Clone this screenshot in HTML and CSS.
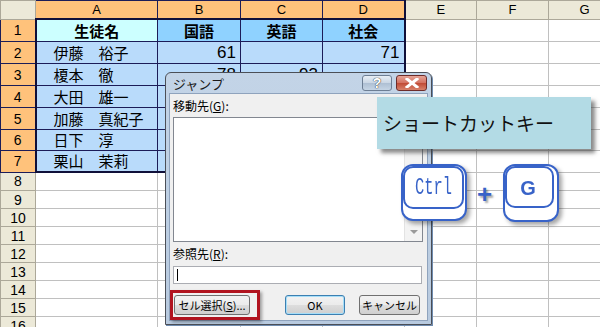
FILE: index.html
```html
<!DOCTYPE html>
<html lang="ja">
<head>
<meta charset="UTF-8">
<title>ジャンプ ショートカットキー</title>
<link rel="stylesheet" href="styles.css">
</head>
<body>

<table class="sheet">
    <colgroup>
        <col class="c-head"><col class="c-a"><col class="c-b"><col class="c-c"><col class="c-d"><col class="c-e"><col class="c-f"><col class="c-g">
    </colgroup>
    <tr class="hdr">
        <th class="corner"></th>
        <th class="sel">A</th><th class="sel">B</th><th class="sel">C</th><th class="sel sel-r">D</th>
        <th>E</th><th>F</th><th>G</th>
    </tr>
    <tr class="tall">
        <th class="sel">1</th>
        <td class="title name top left">生徒名</td>
        <td class="head top">国語</td><td class="head top">英語</td><td class="head top right">社会</td>
        <td></td><td></td><td></td>
    </tr>
    <tr class="tall">
        <th class="sel">2</th>
        <td class="name left">伊藤　裕子</td>
        <td class="num">61</td><td class="num"></td><td class="num right">71</td>
        <td></td><td></td><td></td>
    </tr>
    <tr class="tall">
        <th class="sel">3</th>
        <td class="name left">榎本　徹</td>
        <td class="num">78</td><td class="num">93</td><td class="num right"></td>
        <td></td><td></td><td></td>
    </tr>
    <tr class="tall">
        <th class="sel">4</th>
        <td class="name left">大田　雄一</td>
        <td class="num">84</td><td class="num">66</td><td class="num right">58</td>
        <td></td><td></td><td></td>
    </tr>
    <tr class="tall">
        <th class="sel">5</th>
        <td class="name left">加藤　真紀子</td>
        <td class="num">90</td><td class="num">72</td><td class="num right">80</td>
        <td></td><td></td><td></td>
    </tr>
    <tr class="tall short7">
        <th class="sel">6</th>
        <td class="name left">日下　淳</td>
        <td class="num">55</td><td class="num">81</td><td class="num right">64</td>
        <td></td><td></td><td></td>
    </tr>
    <tr class="tall short7">
        <th class="sel">7</th>
        <td class="name left bottom">栗山　茉莉</td>
        <td class="num bottom">73</td><td class="num bottom">88</td><td class="num right bottom">69</td>
        <td></td><td></td><td></td>
    </tr>
    <tr><th>8</th><td></td><td></td><td></td><td></td><td></td><td></td><td></td></tr>
    <tr><th>9</th><td></td><td></td><td></td><td></td><td></td><td></td><td></td></tr>
    <tr><th>10</th><td></td><td></td><td></td><td></td><td></td><td></td><td></td></tr>
    <tr><th>11</th><td></td><td></td><td></td><td></td><td></td><td></td><td></td></tr>
    <tr><th>12</th><td></td><td></td><td></td><td></td><td></td><td></td><td></td></tr>
    <tr><th>13</th><td></td><td></td><td></td><td></td><td></td><td></td><td></td></tr>
    <tr><th>14</th><td></td><td></td><td></td><td></td><td></td><td></td><td></td></tr>
    <tr><th>15</th><td></td><td></td><td></td><td></td><td></td><td></td><td></td></tr>
    <tr><th>16</th><td></td><td></td><td></td><td></td><td></td><td></td><td></td></tr>
</table>

<!-- Goto dialog -->
<div class="dialog">
    <div class="titlebar">
        <span class="title-text">ジャンプ</span>
        <span class="tb-btn help">?</span>
        <span class="tb-btn close">
            <svg width="14" height="10" viewBox="0 0 14 10"><path d="M2 1 L12 9 M12 1 L2 9" stroke="#fff" stroke-width="3" stroke-linecap="square"/></svg>
        </span>
    </div>
    <div class="dialog-body">
        <div class="label">移動先(<u>G</u>):</div>
        <div class="listbox">
            <div class="scroll"><span class="arrow"></span></div>
        </div>
        <div class="label">参照先(<u>R</u>):</div>
        <div class="input"><span class="caret"></span></div>
        <div class="buttons">
            <span class="mark"><span class="btn sel-btn">セル選択(<u>S</u>)...</span></span>
            <span class="btn ok">OK</span>
            <span class="btn cancel">キャンセル</span>
        </div>
    </div>
</div>

<div class="callout">ショートカットキー</div>

<div class="keys">
    <svg class="key ctrl" width="68" height="60" viewBox="0 0 68 60">
        <rect x="1" y="1" width="64" height="55" rx="11" fill="#fff" stroke="#3863c8" stroke-width="2"/>
        <rect x="3" y="3" width="59" height="41" rx="9" fill="#fff" stroke="#3863c8" stroke-width="2"/>
        <text x="14" y="30" textLength="37" lengthAdjust="spacingAndGlyphs" class="key-ctrl">Ctrl</text>
    </svg>
    <span class="plus">+</span>
    <svg class="key g" width="59" height="61" viewBox="0 0 59 61">
        <rect x="1" y="1" width="54" height="56" rx="11" fill="#fff" stroke="#3863c8" stroke-width="2"/>
        <rect x="3" y="3" width="47" height="40" rx="9" fill="#fff" stroke="#3863c8" stroke-width="2"/>
        <text x="25" y="31" text-anchor="middle" class="key-g">G</text>
    </svg>
</div>

</body>
</html>
```

FILE: styles.css
```css
body {
    margin: 0;
    width: 600px;
    height: 327px;
    overflow: hidden;
    position: relative;
    background: #fff;
    font-family: "Liberation Sans", "Noto Sans CJK JP", sans-serif;
}

/* spreadsheet */
.sheet {
    border-collapse: collapse;
    table-layout: fixed;
    width: 620px;
}
.c-head { width: 35px; }
.c-a { width: 122px; }
.c-b { width: 83px; }
.c-c { width: 82px; }
.c-d { width: 82px; }
.c-e, .c-f, .c-g { width: 72px; }

.sheet th, .sheet td {
    padding: 0;
    height: 17px;
    border: 1px solid #c0c0c0;
    overflow: hidden;
    white-space: nowrap;
}
.sheet th {
    background: #ece9d8;
    border-color: #aca899;
    font-weight: normal;
    font-size: 14px;
    color: #000;
    text-align: center;
}
.sheet .hdr th {
    font-size: 13px;
    height: 17px;
}
.sheet th.sel {
    background: #ffc27b;
    border-color: #1c1c58;
}
.sheet .hdr th.corner {
    background: #ece9d8;
}
.sheet tr.tall th, .sheet tr.tall td {
    height: 21px;
}
.sheet tr.short7 th, .sheet tr.short7 td {
    height: 20px;
}

.sheet td.name, .sheet td.num, .sheet td.head {
    background: #b9dbfb;
    border-color: #1c1c58;
}
.sheet td.name {
    font-family: "Noto Sans CJK JP", sans-serif;
    font-size: 15px;
    padding-left: 17px;
    line-height: 18px;
}
.sheet td.title {
    background: #ccffff;
    font-weight: bold;
    text-align: center;
    padding-left: 0;
}
.sheet td.head {
    background: #8fd2ff;
    font-family: "Noto Sans CJK JP", sans-serif;
    font-weight: bold;
    font-size: 15px;
    text-align: center;
}
.sheet td.num {
    font-size: 17px;
    text-align: right;
    padding-right: 4px;
}
.sheet td.top { border-top: 2px solid #10103a; }
.sheet td.left { border-left: 2px solid #10103a; }
.sheet td.right { border-right: 2px solid #10103a; }
.sheet td.bottom { border-bottom: 2px solid #10103a; }
.sheet th.sel-r { border-right: 2px solid #10103a; }

/* dialog */
.dialog {
    position: absolute;
    left: 165px;
    top: 72px;
    width: 267px;
    height: 253px;
    border: 1px solid #4b4f57;
    border-radius: 6px 6px 0 0;
    background: linear-gradient(#c3d4e7, #b8cadf);
    padding: 0 3px 3px 3px;
    box-sizing: border-box;
    display: flex;
    flex-direction: column;
    box-shadow: 1px 1px 0 #6f8cb0;
}
.titlebar {
    height: 23px;
    display: flex;
    align-items: center;
    gap: 4px;
    padding-left: 4px;
}
.title-text {
    flex: 1;
    font-family: "Noto Sans CJK JP", sans-serif;
    font-size: 13px;
    color: #1a1a1a;
}
.tb-btn {
    height: 14px;
    border-radius: 3px;
    display: flex;
    align-items: center;
    justify-content: center;
}
.help {
    width: 28px;
    border: 1px solid #6d7e94;
    background: linear-gradient(#e8eef5 0%, #c9d6e4 50%, #aebfd3 51%, #c6d5e5 100%);
    color: #fff;
    font-size: 14px;
    font-weight: bold;
    text-shadow: 0 0 1px #333, 0 0 1px #333;
}
.close {
    width: 29px;
    border: 1px solid #6e2d2a;
    background: linear-gradient(#e6a497 0%, #d3705f 50%, #c04a35 51%, #d7826b 100%);
    margin-right: 1px;
}
.dialog-body {
    flex: 1;
    background: #f0f0f0;
    border: 1px solid #8fa3bd;
    padding: 0 3px;
    display: flex;
    flex-direction: column;
    font-family: "Noto Sans CJK JP", sans-serif;
    font-size: 12px;
    color: #000;
}
.label {
    height: 14px;
    line-height: 14px;
    margin-top: 5px;
}
.listbox {
    margin-top: 4px;
    height: 123px;
    background: #fff;
    border: 1px solid #828790;
    margin-right: 1px;
    display: flex;
    justify-content: flex-end;
}
.scroll {
    width: 17px;
    background: #f3f3f3;
    border-left: 1px solid #e3e3e3;
    display: flex;
    align-items: flex-end;
    justify-content: center;
}
.arrow {
    width: 0;
    height: 0;
    border-left: 4px solid transparent;
    border-right: 4px solid transparent;
    border-top: 4px solid #9a9a9a;
    margin-bottom: 7px;
}
.listbox + .label {
    margin-top: 5px;
}
.input {
    height: 16px;
    margin-top: 5px;
    margin-right: 2px;
    background: #fff;
    border: 1px solid #abadb3;
    display: flex;
    align-items: center;
    padding-left: 3px;
}
.caret {
    width: 1px;
    height: 12px;
    background: #000;
}
.buttons {
    margin-top: 6px;
    display: flex;
    align-items: center;
}
.mark {
    border: 3px solid #b1131f;
    padding: 2px 7px 2px 1px;
    margin-left: -3px;
    box-shadow: 2px 2px 3px rgba(0, 0, 0, 0.35);
    display: flex;
}
.btn {
    height: 18px;
    line-height: 18px;
    padding: 0;
    border: 1px solid #707070;
    border-radius: 3px;
    background: linear-gradient(#f2f2f2 0%, #ebebeb 50%, #dddddd 51%, #cfcfcf 100%);
    font-size: 11px;
    text-align: center;
    white-space: nowrap;
}
.sel-btn {
    width: 74px;
}
.ok {
    width: 58px;
    margin-left: 25px;
    border-color: #3c7fb1;
    box-shadow: inset 0 0 0 1px #a6def8;
}
.cancel {
    width: 59px;
    margin-left: 14px;
}

/* callout */
.callout {
    position: absolute;
    left: 377px;
    top: 97px;
    width: 214px;
    height: 52px;
    box-sizing: border-box;
    padding-left: 6px;
    background: #b3dbe5;
    font-family: "Noto Sans CJK JP", sans-serif;
    font-size: 19px;
    line-height: 52px;
    color: #111;
    box-shadow: 4px 4px 4px rgba(60, 60, 60, 0.6);
}

/* keys */
.keys {
    position: absolute;
    left: 401px;
    top: 164px;
    display: flex;
    align-items: flex-start;
}
.key {
    filter: drop-shadow(3px 3px 2px rgba(0, 0, 0, 0.35));
}
.key-ctrl {
    font-family: "Liberation Mono", monospace;
    font-size: 23px;
    fill: #3863c8;
}
.key-g {
    font-family: "Liberation Sans", sans-serif;
    font-weight: bold;
    font-size: 20px;
    fill: #3863c8;
}
.plus {
    margin: 15px 0 0 8px;
    width: 26px;
    font-size: 26px;
    font-weight: bold;
    color: #3863c8;
    text-shadow: 2px 2px 2px rgba(0, 0, 0, 0.35);
}
```
